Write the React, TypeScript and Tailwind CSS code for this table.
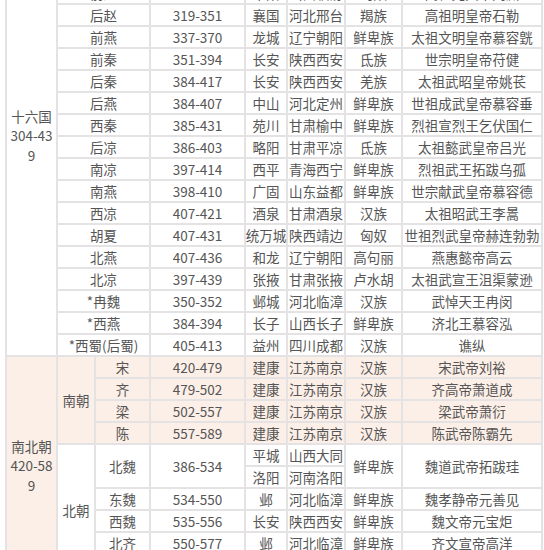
import React from "react";

type Row = [string, string, string, string, string, string];

const hidden: Row[] = [
  ["前凉", "301-376", "姑臧", "甘肃武威", "汉族", "太祖武王张轨"],
  ["成汉", "304-347", "成都", "四川成都", "巴氐族", "太宗武帝李雄"],
  ["前赵", "304-329", "平阳", "山西临汾", "匈奴", "高祖光文帝刘渊"],
];

const sixteen: Row[] = [
  ["后赵", "319-351", "襄国", "河北邢台", "羯族", "高祖明皇帝石勒"],
  ["前燕", "337-370", "龙城", "辽宁朝阳", "鲜卑族", "太祖文明皇帝慕容皝"],
  ["前秦", "351-394", "长安", "陕西西安", "氐族", "世宗明皇帝苻健"],
  ["后秦", "384-417", "长安", "陕西西安", "羌族", "太祖武昭皇帝姚苌"],
  ["后燕", "384-407", "中山", "河北定州", "鲜卑族", "世祖成武皇帝慕容垂"],
  ["西秦", "385-431", "苑川", "甘肃榆中", "鲜卑族", "烈祖宣烈王乞伏国仁"],
  ["后凉", "386-403", "略阳", "甘肃平凉", "氐族", "太祖懿武皇帝吕光"],
  ["南凉", "397-414", "西平", "青海西宁", "鲜卑族", "烈祖武王拓跋乌孤"],
  ["南燕", "398-410", "广固", "山东益都", "鲜卑族", "世宗献武皇帝慕容德"],
  ["西凉", "407-421", "酒泉", "甘肃酒泉", "汉族", "太祖昭武王李暠"],
  ["胡夏", "407-431", "统万城", "陕西靖边", "匈奴", "世祖烈武皇帝赫连勃勃"],
  ["北燕", "407-436", "和龙", "辽宁朝阳", "高句丽", "燕惠懿帝高云"],
  ["北凉", "397-439", "张掖", "甘肃张掖", "卢水胡", "太祖武宣王沮渠蒙逊"],
  ["*冉魏", "350-352", "邺城", "河北临漳", "汉族", "武悼天王冉闵"],
  ["*西燕", "384-394", "长子", "山西长子", "鲜卑族", "济北王慕容泓"],
  ["*西蜀(后蜀)", "405-413", "益州", "四川成都", "汉族", "谯纵"],
];

const south: Row[] = [
  ["宋", "420-479", "建康", "江苏南京", "汉族", "宋武帝刘裕"],
  ["齐", "479-502", "建康", "江苏南京", "汉族", "齐高帝萧道成"],
  ["梁", "502-557", "建康", "江苏南京", "汉族", "梁武帝萧衍"],
  ["陈", "557-589", "建康", "江苏南京", "汉族", "陈武帝陈霸先"],
];

const north: Row[] = [
  ["东魏", "534-550", "邺", "河北临漳", "鲜卑族", "魏孝静帝元善见"],
  ["西魏", "535-556", "长安", "陕西西安", "鲜卑族", "魏文帝元宝炬"],
  ["北齐", "550-577", "邺", "河北临漳", "鲜卑族", "齐文宣帝高洋"],
  ["北周", "557-581", "长安", "陕西西安", "鲜卑族", "周孝闵帝宇文觉"],
];

function C({
  children,
  className = "",
}: {
  children?: React.ReactNode;
  className?: string;
}) {
  return (
    <div
      className={
        "flex items-center justify-center whitespace-nowrap text-center " +
        className
      }
    >
      {children}
    </div>
  );
}

function SixRow({ r }: { r: Row }) {
  return (
    <>
      <C className="col-span-2 bg-white">{r[0]}</C>
      <C className="bg-white">{r[1]}</C>
      <C className="bg-white">{r[2]}</C>
      <C className="bg-white">{r[3]}</C>
      <C className="bg-white">{r[4]}</C>
      <C className="bg-white">{r[5]}</C>
    </>
  );
}

function SubRow({ r, pink }: { r: Row; pink: boolean }) {
  const bg = pink ? "bg-[#fcefe7]" : "bg-white";
  return (
    <>
      <C className={bg}>{r[0]}</C>
      <C className={bg}>{r[1]}</C>
      <C className={bg}>{r[2]}</C>
      <C className={bg}>{r[3]}</C>
      <C className={bg}>{r[4]}</C>
      <C className={bg}>{r[5]}</C>
    </>
  );
}

export default function App() {
  return (
    <div lang="zh-CN" className="h-[550px] w-[544px] overflow-hidden bg-white">
      <div
        className="ml-[5px] mt-[-63px] grid w-max grid-cols-[49px_36px_53px_93px_40px_56px_55px_138px] auto-rows-[20px] gap-[2px] bg-[#e4e2e2] p-[2px] text-[13.5px] leading-[20px] text-[#555555] antialiased"
        style={{ fontFamily: '"Noto Sans CJK SC", "Noto Sans", sans-serif' }}
      >
        <C className="row-span-19 flex-col bg-white pb-[22px] leading-[19.5px]">
          <span>十六国</span>
          <span>304-43</span>
          <span>9</span>
        </C>
        {hidden.map((r, i) => (
          <SixRow key={"h" + i} r={r} />
        ))}
        {sixteen.map((r, i) => (
          <SixRow key={"s" + i} r={r} />
        ))}

        <C className="row-span-10 flex-col bg-[#fcefe7] leading-[19.5px]">
          <span>南北朝</span>
          <span>420-58</span>
          <span>9</span>
        </C>
        <C className="row-span-4 bg-[#fcefe7]">南朝</C>
        {south.map((r, i) => (
          <SubRow key={"n" + i} r={r} pink={true} />
        ))}

        <C className="row-span-6 bg-white">北朝</C>
        <C className="row-span-2 bg-white">北魏</C>
        <C className="row-span-2 bg-white">386-534</C>
        <C className="bg-white">平城</C>
        <C className="bg-white">山西大同</C>
        <C className="row-span-2 bg-white">鲜卑族</C>
        <C className="row-span-2 bg-white">魏道武帝拓跋珪</C>
        <C className="bg-white">洛阳</C>
        <C className="bg-white">河南洛阳</C>
        {north.map((r, i) => (
          <SubRow key={"b" + i} r={r} pink={false} />
        ))}
      </div>
    </div>
  );
}
